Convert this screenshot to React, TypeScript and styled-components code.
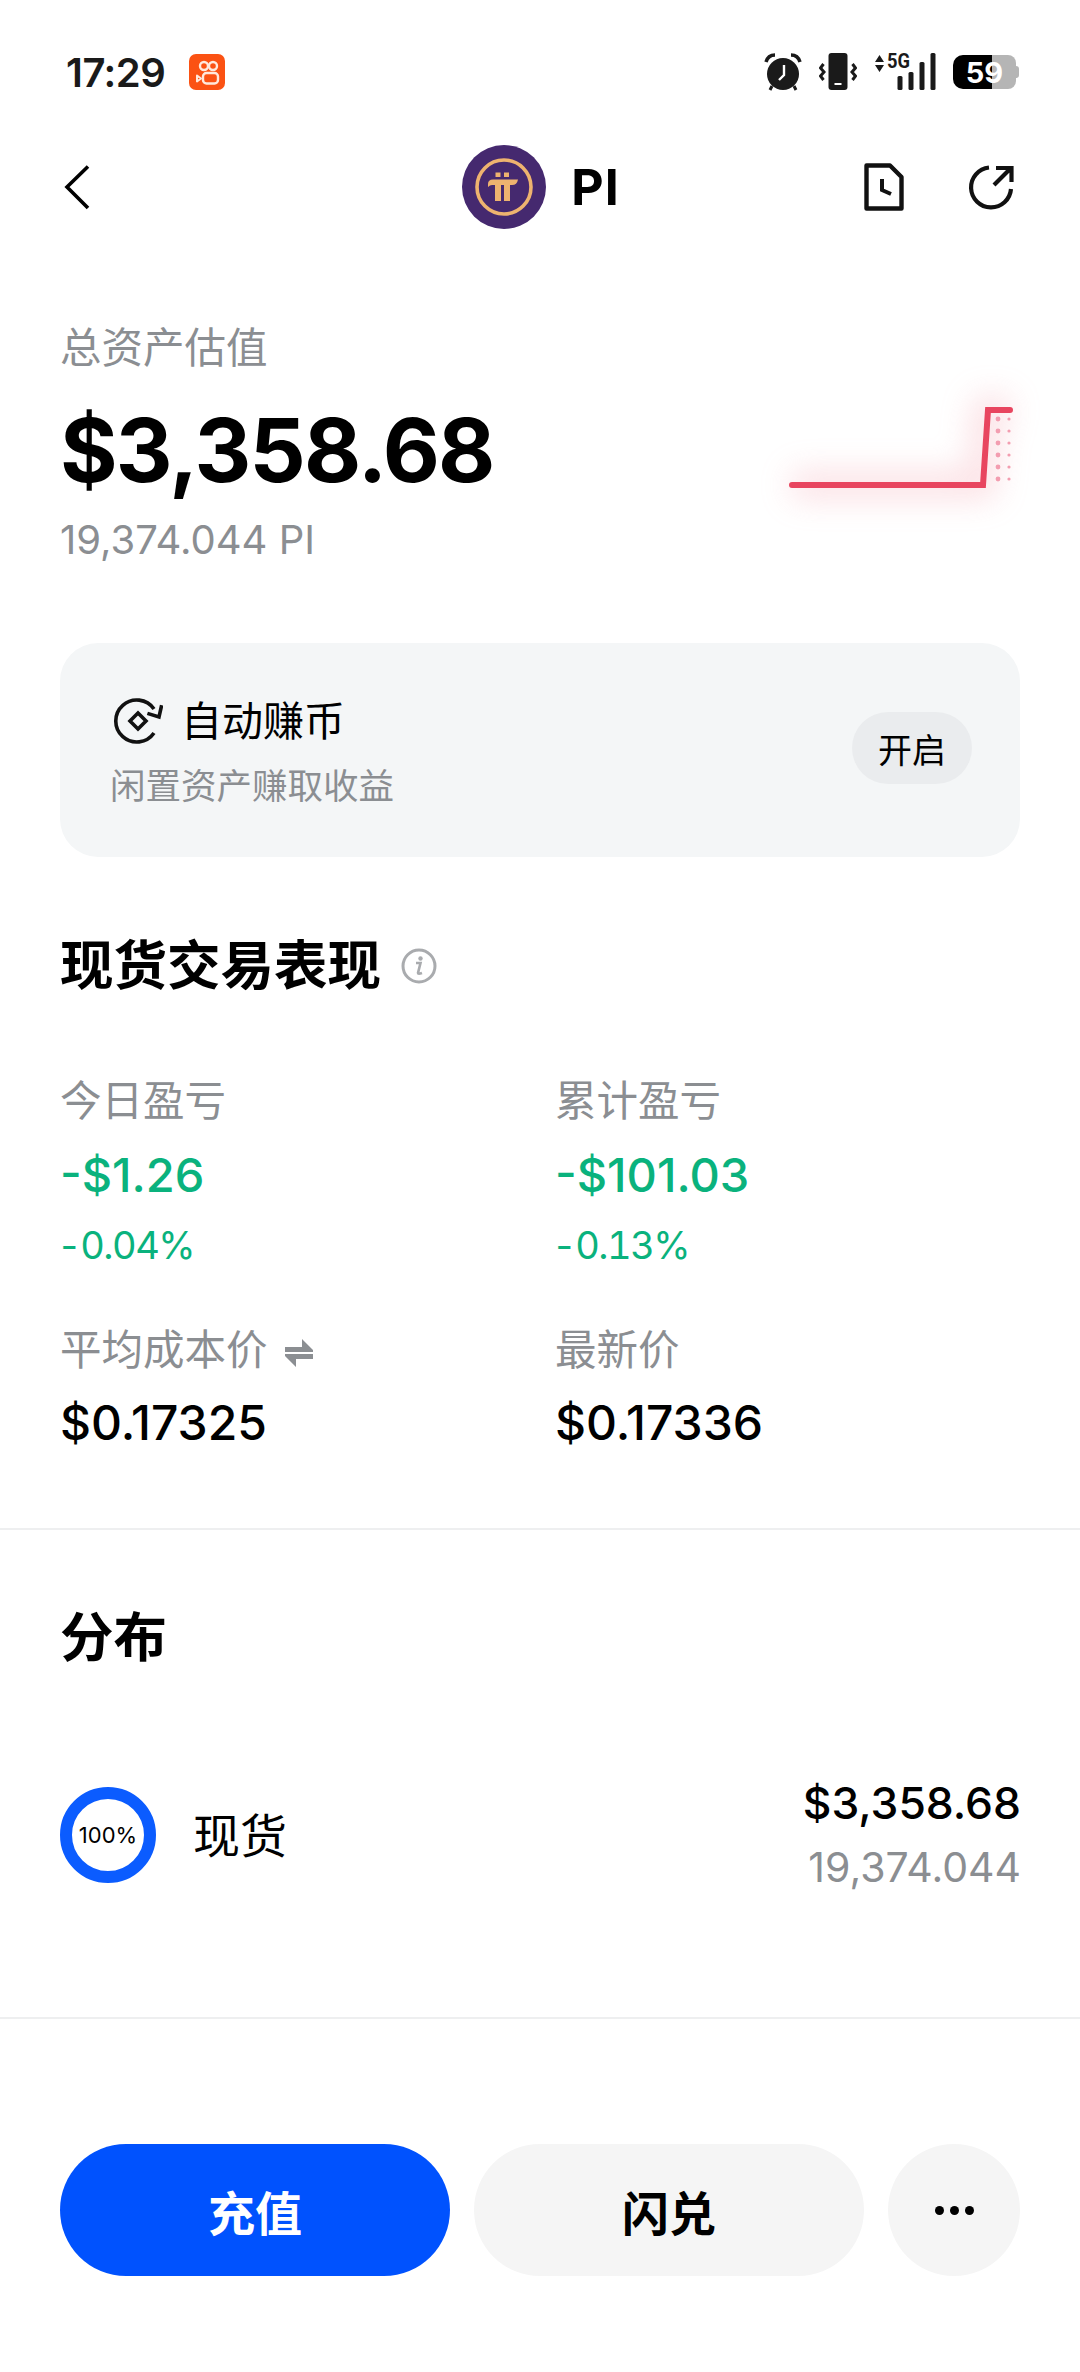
import React from 'react';
import styled, { createGlobalStyle } from 'styled-components';

const FONT = `Inter, "Noto Sans CJK SC", sans-serif`;
const GREY = '#8b8e92';
const GREEN = '#0ab27d';

const GlobalStyle = createGlobalStyle`
    html, body {
        margin: 0;
        padding: 0;
        background: #fff;
        font-family: ${FONT};
        color: #000;
    }
    * {
        box-sizing: border-box;
    }
`;

const Page = styled.div`
    width: 1080px;
    height: 2372px;
    overflow: hidden;
    background: #fff;
`;

const StatusBar = styled.div`
    height: 144px;
    padding: 0 61px 0 66px;
    display: flex;
    align-items: center;
    justify-content: space-between;
`;

const StatusLeft = styled.div`
    display: flex;
    align-items: center;
    gap: 24px;
`;

const Time = styled.span`
    font-size: 40px;
    font-weight: 600;
    color: #1a1a1a;
    letter-spacing: -0.5px;
`;

const StatusRight = styled.div`
    display: flex;
    align-items: center;
    gap: 17px;
`;

const SignalSvg = styled.svg`
    margin-top: -8px;
`;

const NetLabel = styled.text`
    font-family: "Roboto", sans-serif;
    font-size: 21px;
    font-weight: 700;
    fill: #1a1a1a;
`;

const Battery = styled.div`
    position: relative;
    width: 63px;
    height: 34px;
    margin-right: 3px;
    border-radius: 10px 8px 8px 10px;
    background: linear-gradient(90deg, #000 0 62%, #b5b5b5 62% 100%);
    display: flex;
    align-items: center;
    justify-content: center;
    font-size: 29px;
    font-weight: 700;
    color: #fff;
    &::after {
        content: '';
        position: absolute;
        right: -3px;
        top: 11px;
        width: 3px;
        height: 12px;
        border-radius: 0 3px 3px 0;
        background: #b5b5b5;
    }
`;

const Nav = styled.div`
    height: 86px;
    padding: 0 66px 0 64px;
    display: grid;
    grid-template-columns: 1fr auto 1fr;
    align-items: center;
`;

const BackButton = styled.div`
    display: flex;
    align-items: center;
`;

const Coin = styled.div`
    display: flex;
    align-items: center;
    gap: 25px;
    margin-left: 4px;
`;

const CoinName = styled.span`
    font-size: 50px;
    font-weight: 700;
    letter-spacing: 1px;
`;

const NavActions = styled.div`
    display: flex;
    justify-content: flex-end;
    align-items: center;
    gap: 64px;
`;

const Content = styled.div`
    padding: 0 60px;
`;

const Summary = styled.section`
    margin-top: 93px;
    display: flex;
    justify-content: space-between;
`;

const SummaryLeft = styled.div`
    display: flex;
    flex-direction: column;
`;

const Label = styled.div`
    font-size: 41.5px;
    line-height: 50px;
    color: ${GREY};
    display: flex;
    align-items: center;
    gap: 16px;
`;

const Amount = styled.div`
    margin-top: 27px;
    font-size: 88px;
    line-height: 100px;
    font-weight: 700;
    letter-spacing: -1.8px;
`;

const AmountSub = styled.div`
    margin-top: 15px;
    font-size: 40px;
    line-height: 50px;
    color: ${GREY};
`;

const Spark = styled.svg`
    margin-top: 87px;
    margin-right: 6px;
    overflow: visible;
`;

const EarnCard = styled.section`
    margin-top: 78px;
    height: 214px;
    border-radius: 38px;
    background: #f4f6f7;
    padding: 0 48px 0 50px;
    display: flex;
    align-items: center;
    justify-content: space-between;
`;

const EarnText = styled.div`
    display: flex;
    flex-direction: column;
    gap: 16px;
    margin-top: 8px;
`;

const EarnTitle = styled.div`
    display: flex;
    align-items: center;
    gap: 18px;
    margin-left: 3px;
    font-size: 41px;
    line-height: 50px;
`;

const EarnSub = styled.div`
    font-size: 35.5px;
    line-height: 50px;
    color: ${GREY};
`;

const EnableButton = styled.div`
    width: 120px;
    height: 72px;
    margin-top: -4px;
    border-radius: 36px;
    background: #eaecee;
    display: flex;
    align-items: center;
    justify-content: center;
    font-size: 34px;
`;

const Heading = styled.h2<{ $top: number }>`
    margin: ${(p) => p.$top}px 0 0;
    display: flex;
    align-items: center;
    gap: 20px;
    font-size: 53.5px;
    line-height: 70px;
    font-weight: 700;
`;

const StatGrid = styled.div`
    margin-top: 75px;
    display: grid;
    grid-template-columns: 495px 1fr;
`;

const Stat = styled.div`
    display: flex;
    flex-direction: column;
`;

const ProfitValue = styled.div`
    margin-top: 19px;
    font-size: 47px;
    line-height: 60px;
    font-weight: 500;
    color: ${GREEN};
`;

const ProfitRate = styled.div`
    margin-top: 15px;
    margin-left: -3px;
    font-size: 38px;
    line-height: 50px;
    font-variant-numeric: tabular-nums;
    letter-spacing: -1.5px;
    color: ${GREEN};
`;

const PriceBlock = styled(Stat)`
    margin-top: 55px;
`;

const PriceValue = styled.div`
    margin-top: 18px;
    font-size: 48px;
    line-height: 60px;
    font-weight: 500;
`;

const Divider = styled.div<{ $top: number }>`
    margin-top: ${(p) => p.$top}px;
    height: 2px;
    background: #eeeff0;
`;

const DistRow = styled.div`
    margin-top: 104px;
    display: flex;
    align-items: center;
    justify-content: space-between;
`;

const DistLeft = styled.div`
    display: flex;
    align-items: center;
    gap: 37px;
`;

const DistName = styled.span`
    font-size: 47px;
    margin-top: -4px;
`;

const Donut = styled.div`
    width: 96px;
    height: 96px;
    border-radius: 50%;
    border: 12px solid #0b5cff;
    display: flex;
    align-items: center;
    justify-content: center;
    font-size: 22px;
    white-space: nowrap;
`;

const DistRight = styled.div`
    display: flex;
    flex-direction: column;
    align-items: flex-end;
    gap: 9px;
    margin: -4px -1px 0 0;
`;

const DistValue = styled.div`
    font-size: 44.4px;
    line-height: 60px;
    font-weight: 500;
`;

const DistAmount = styled.div`
    font-size: 41px;
    line-height: 50px;
    color: ${GREY};
`;

const Actions = styled.div`
    margin-top: 125px;
    display: flex;
    gap: 24px;
`;

const ActionButton = styled.div<{ $primary?: boolean }>`
    flex: 1;
    height: 132px;
    border-radius: 66px;
    background: ${(p) => (p.$primary ? '#0052fe' : '#f5f5f5')};
    color: ${(p) => (p.$primary ? '#fff' : '#000')};
    display: flex;
    align-items: center;
    justify-content: center;
    font-size: 47px;
    font-weight: 700;
`;

const MoreButton = styled.div`
    width: 132px;
    height: 132px;
    flex: none;
    border-radius: 50%;
    background: #f5f5f5;
    display: flex;
    align-items: center;
    justify-content: center;
    gap: 6px;
`;

const MoreDot = styled.i`
    width: 9px;
    height: 9px;
    border-radius: 50%;
    background: #000;
`;

const SwapGlyph = styled.svg`
    margin-top: 5px;
`;

function KuaishouIcon() {
    return (
        <svg width="36" height="36" viewBox="0 0 36 36">
            <rect width="36" height="36" rx="7" fill="#fb5213" />
            <g fill="none" stroke="#ffe9dc" strokeWidth="2.4">
                <circle cx="15" cy="12" r="4" />
                <circle cx="24" cy="12" r="4" />
                <rect x="14" y="19" width="15" height="10.5" rx="3.5" />
            </g>
            <path d="M8 21.5 L12 24.5 L8 27.5 Z" fill="none" stroke="#ffe9dc" strokeWidth="2" strokeLinejoin="round" />
        </svg>
    );
}

function AlarmIcon() {
    return (
        <svg width="38" height="38" viewBox="0 0 38 38">
            <circle cx="19" cy="21" r="16" fill="#1a1a1a" />
            <path d="M2 9 Q4 2 11 2" fill="none" stroke="#1a1a1a" strokeWidth="3.5" />
            <path d="M36 9 Q34 2 27 2" fill="none" stroke="#1a1a1a" strokeWidth="3.5" />
            <path d="M8 33 L6 37 M30 33 L32 37" stroke="#1a1a1a" strokeWidth="3" />
            <path d="M20 12 V22 L15 27" fill="none" stroke="#fff" strokeWidth="2.4" />
        </svg>
    );
}

function VibrateIcon() {
    return (
        <svg width="38" height="38" viewBox="0 0 38 38">
            <rect x="9.5" y="0" width="19" height="37" rx="3" fill="#1a1a1a" />
            <rect x="15.5" y="30" width="7" height="2" fill="#fff" />
            <path d="M4.5 11 L1.5 15 L5 19 L1.5 23 L4.5 27" fill="none" stroke="#1a1a1a" strokeWidth="3" />
            <path d="M33.5 11 L36.5 15 L33 19 L36.5 23 L33.5 27" fill="none" stroke="#1a1a1a" strokeWidth="3" />
        </svg>
    );
}

function SignalIcon() {
    return (
        <SignalSvg width="62" height="46" viewBox="0 -8 62 46">
            <path d="M1 9 L5.5 2 L10 9 Z M1 12 L10 12 L5.5 19 Z" fill="#1a1a1a" />
            <NetLabel x="13" y="15" textLength="23" lengthAdjust="spacingAndGlyphs">5G</NetLabel>
            <rect x="23.5" y="23" width="5" height="14" rx="1.5" fill="#1a1a1a" />
            <rect x="34.5" y="19" width="5" height="18" rx="1.5" fill="#1a1a1a" />
            <rect x="45.5" y="9" width="5" height="28" rx="1.5" fill="#1a1a1a" />
            <rect x="56.5" y="0" width="5" height="37" rx="1.5" fill="#1a1a1a" />
        </SignalSvg>
    );
}

function BackIcon() {
    return (
        <svg width="26" height="46" viewBox="0 0 26 46">
            <path d="M24 2.5 L3 23 L24 44" fill="none" stroke="#000" strokeWidth="3.6" />
        </svg>
    );
}

function PiLogo() {
    return (
        <svg width="84" height="84" viewBox="0 0 84 84">
            <circle cx="42" cy="42" r="42" fill="#45296f" />
            <circle cx="42" cy="42" r="27" fill="none" stroke="#eeb36f" strokeWidth="3.6" />
            <rect x="33.5" y="27.5" width="5" height="4.5" fill="#eeb36f" />
            <rect x="42" y="27.5" width="5" height="4.5" fill="#eeb36f" />
            <path d="M26 39 Q26 34.5 31 34.5 H56 Q55 40 50 40 H48 V56 H42 V40 H39 V56 H33 V40 H30 Q28 40 26 42 Z" fill="#eeb36f" />
        </svg>
    );
}

function HistoryIcon() {
    return (
        <svg width="40" height="48" viewBox="0 0 40 48">
            <path d="M2.5 2.5 H26 L37.5 14 V45.5 H2.5 Z" fill="none" stroke="#111" strokeWidth="4.4" strokeLinejoin="round" />
            <path d="M18 16 V27 L27 31" fill="none" stroke="#111" strokeWidth="4" />
        </svg>
    );
}

function ShareIcon() {
    return (
        <svg width="46" height="46" viewBox="0 0 46 46">
            <path d="M21 3.5 A20 20 0 1 0 43 25" fill="none" stroke="#111" strokeWidth="4.2" />
            <path d="M26 21 L42 5 M28 4 H43.5 V18" fill="none" stroke="#111" strokeWidth="4.2" />
        </svg>
    );
}

function Sparkline() {
    const dots = [9, 21, 33, 45, 57, 69];
    return (
        <Spark width="230" height="90" viewBox="0 0 230 90">
            <defs>
                <filter id="glow" x="-20%" y="-80%" width="140%" height="260%">
                    <feGaussianBlur stdDeviation="16" />
                </filter>
            </defs>
            <path d="M8 75 H198 L203 0 H225" fill="none" stroke="#f4a0ac" strokeWidth="26" opacity="0.35" filter="url(#glow)" />
            {dots.map((y) => (
                <g key={y} fill="#f39db0">
                    <circle cx="214" cy={y} r="2.4" />
                    <circle cx="225" cy={y} r="1.6" />
                </g>
            ))}
            <path d="M8 75 H199 L204 0 H226" fill="none" stroke="#e8455f" strokeWidth="6" strokeLinecap="round" />
        </Spark>
    );
}

function EarnIcon() {
    return (
        <svg width="50" height="48" viewBox="0 0 50 48">
            <path d="M41 12 A21 21 0 1 0 41 36" fill="none" stroke="#111" strokeWidth="3.6" />
            <path d="M34 18 L46 20 L47 8" fill="none" stroke="#111" strokeWidth="3.6" transform="rotate(8 46 20)" />
            <path d="M25 16 L33 24 L25 32 L17 24 Z" fill="none" stroke="#111" strokeWidth="3.6" />
        </svg>
    );
}

function InfoIcon() {
    return (
        <svg width="36" height="36" viewBox="0 0 36 36">
            <circle cx="18" cy="18" r="16" fill="none" stroke="#a9abae" strokeWidth="3" />
            <circle cx="19.5" cy="10.5" r="2.2" fill="#a9abae" />
            <path d="M15 15 H19.5 L17 25 Q17 26.5 21 25" fill="none" stroke="#a9abae" strokeWidth="2.6" />
        </svg>
    );
}

function SwapIcon() {
    return (
        <SwapGlyph width="30" height="30" viewBox="0 0 30 30">
            <path d="M1 9 H18 V1 L29 12 V14 H1 Z M29 21 H12 V29 L1 18 V16 H29 Z" fill="#8b8e92" />
        </SwapGlyph>
    );
}

export default function App() {
    return (
        <Page>
            <GlobalStyle />
            <StatusBar>
                <StatusLeft>
                    <Time>17:29</Time>
                    <KuaishouIcon />
                </StatusLeft>
                <StatusRight>
                    <AlarmIcon />
                    <VibrateIcon />
                    <SignalIcon />
                    <Battery>59</Battery>
                </StatusRight>
            </StatusBar>
            <Nav>
                <BackButton>
                    <BackIcon />
                </BackButton>
                <Coin>
                    <PiLogo />
                    <CoinName>PI</CoinName>
                </Coin>
                <NavActions>
                    <HistoryIcon />
                    <ShareIcon />
                </NavActions>
            </Nav>
            <Content>
                <Summary>
                    <SummaryLeft>
                        <Label>总资产估值</Label>
                        <Amount>$3,358.68</Amount>
                        <AmountSub>19,374.044 PI</AmountSub>
                    </SummaryLeft>
                    <Sparkline />
                </Summary>
                <EarnCard>
                    <EarnText>
                        <EarnTitle>
                            <EarnIcon />
                            自动赚币
                        </EarnTitle>
                        <EarnSub>闲置资产赚取收益</EarnSub>
                    </EarnText>
                    <EnableButton>开启</EnableButton>
                </EarnCard>
                <Heading $top={74}>
                    现货交易表现
                    <InfoIcon />
                </Heading>
                <StatGrid>
                    <Stat>
                        <Label>今日盈亏</Label>
                        <ProfitValue>-$1.26</ProfitValue>
                        <ProfitRate>-0.04%</ProfitRate>
                    </Stat>
                    <Stat>
                        <Label>累计盈亏</Label>
                        <ProfitValue>-$101.03</ProfitValue>
                        <ProfitRate>-0.13%</ProfitRate>
                    </Stat>
                    <PriceBlock>
                        <Label>
                            平均成本价
                            <SwapIcon />
                        </Label>
                        <PriceValue>$0.17325</PriceValue>
                    </PriceBlock>
                    <PriceBlock>
                        <Label>最新价</Label>
                        <PriceValue>$0.17336</PriceValue>
                    </PriceBlock>
                </StatGrid>
            </Content>
            <Divider $top={75} />
            <Content>
                <Heading $top={73}>分布</Heading>
                <DistRow>
                    <DistLeft>
                        <Donut>100%</Donut>
                        <DistName>现货</DistName>
                    </DistLeft>
                    <DistRight>
                        <DistValue>$3,358.68</DistValue>
                        <DistAmount>19,374.044</DistAmount>
                    </DistRight>
                </DistRow>
            </Content>
            <Divider $top={125} />
            <Content>
                <Actions>
                    <ActionButton $primary>充值</ActionButton>
                    <ActionButton>闪兑</ActionButton>
                    <MoreButton>
                        <MoreDot />
                        <MoreDot />
                        <MoreDot />
                    </MoreButton>
                </Actions>
            </Content>
        </Page>
    );
}
